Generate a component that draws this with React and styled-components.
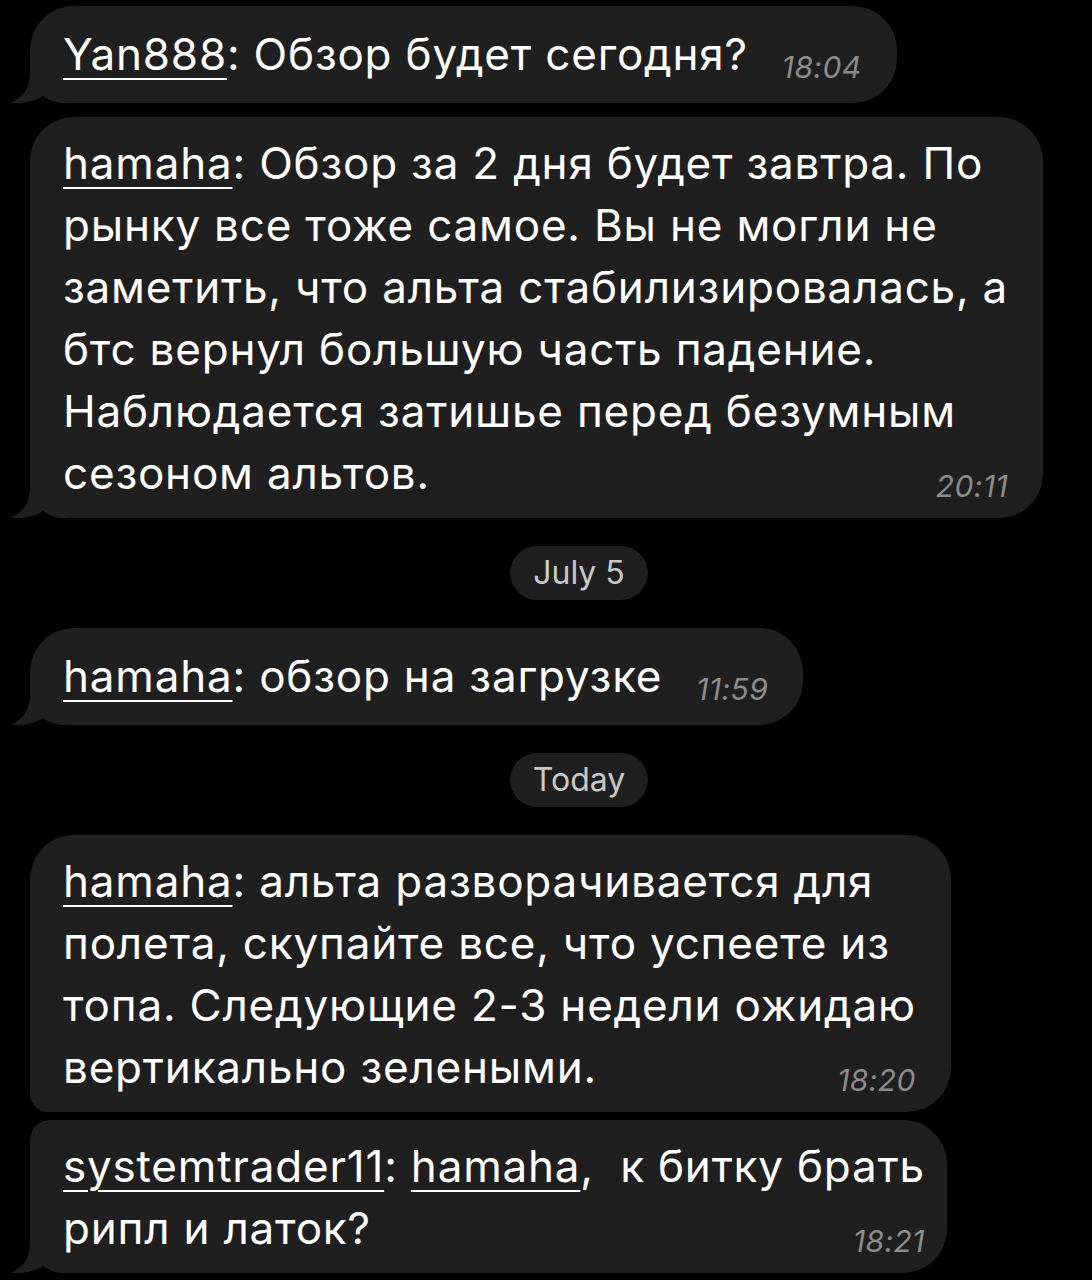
import React from "react";
import styled, { createGlobalStyle } from "styled-components";

const GlobalStyle = createGlobalStyle`
  html, body {
    margin: 0;
    padding: 0;
    background: #000;
  }
  body {
    font-family: Inter, "Noto Sans", "DejaVu Sans", sans-serif;
    -webkit-font-smoothing: antialiased;
  }
`;

const Chat = styled.div`
  width: 1092px;
  min-height: 1280px;
  box-sizing: border-box;
  padding: 6px 0 0 30px;
  display: flex;
  flex-direction: column;
  align-items: flex-start;
  overflow: hidden;
`;

const Bubble = styled.div`
  position: relative;
  isolation: isolate;
  box-sizing: border-box;
  width: fit-content;
  background: #1f1f1f;
  color: #fff;
  font-size: 44px;
  line-height: 62px;
  letter-spacing: 0.8px;
  padding: ${(p) => (p.$single ? "17px" : "15px")} ${(p) => p.$pr}px
    ${(p) => (p.$single ? "18px" : "14px")} 33px;
  margin-top: ${(p) => p.$gap}px;
  border-radius: ${(p) => (p.$groupTop ? "20px" : "44px")} 44px 44px
    ${(p) => (p.$tail ? "44px" : "18px")};
  display: flow-root;
`;

const Name = styled.span`
  text-decoration: underline;
  text-decoration-thickness: 2px;
  text-underline-offset: 8px;
`;

const Time = styled.span`
  float: right;
  margin-left: 34px;
  margin-top: 27px;
  height: 34px;
  line-height: 34px;
  font-size: 30px;
  font-style: italic;
  color: #8c8c8c;
  letter-spacing: 0.4px;
`;

const TailSvg = styled.svg`
  position: absolute;
  z-index: -1;
  left: -20px;
  bottom: 0;
  width: 60px;
  height: 50px;
  display: block;
`;

const Tail = () => (
  <TailSvg viewBox="0 0 60 50">
    <path
      d="M20 0 L20 20 C20 36 12 45 0 50 C10 51 24 49 33 43 C38 47 44 49.5 52 50 L60 50 L60 0 Z"
      fill="#1f1f1f"
    />
  </TailSvg>
);

const DateRow = styled.div`
  align-self: stretch;
  margin-top: 28px;
  padding-left: 36px;
  display: flex;
  justify-content: center;
`;

const DatePill = styled.div`
  background: #1f1f1f;
  color: #c9c9c9;
  font-size: 32px;
  height: 54px;
  line-height: 54px;
  padding: 0 20px;
  border-radius: 27px;
  box-sizing: border-box;
  min-width: 138px;
  text-align: center;
`;

const Message = ({ children, time, tail = true, gap = 0, single, groupTop, pr = 35 }) => (
  <Bubble $tail={tail} $gap={gap} $single={single} $groupTop={groupTop} $pr={pr}>
    {tail && <Tail />}
    {children}
    <Time>{time}</Time>
  </Bubble>
);

export default function App() {
  return (
    <>
      <GlobalStyle />
      <Chat>
        <Message time="18:04" single>
          <Name>Yan888</Name>: Обзор будет сегодня?
        </Message>
        <Message time="20:11" gap={14}>
          <Name>hamaha</Name>: Обзор за 2 дня будет завтра. По
          <br />
          рынку все тоже самое. Вы не могли не
          <br />
          заметить, что альта стабилизировалась, а
          <br />
          бтс вернул большую часть падение.
          <br />
          Наблюдается затишье перед безумным
          <br />
          сезоном альтов.
        </Message>
        <DateRow>
          <DatePill>July 5</DatePill>
        </DateRow>
        <Message time="11:59" gap={28} single>
          <Name>hamaha</Name>: обзор на загрузке
        </Message>
        <DateRow>
          <DatePill>Today</DatePill>
        </DateRow>
        <Message time="18:20" gap={28} tail={false}>
          <Name>hamaha</Name>: альта разворачивается для
          <br />
          полета, скупайте все, что успеете из
          <br />
          топа. Следующие 2-3 недели ожидаю
          <br />
          вертикально зелеными.
        </Message>
        <Message time="18:21" gap={8} groupTop pr={22}>
          <Name>systemtrader11</Name>: <Name>hamaha</Name>,&nbsp; к битку брать
          <br />
          рипл и латок?
        </Message>
      </Chat>
    </>
  );
}
